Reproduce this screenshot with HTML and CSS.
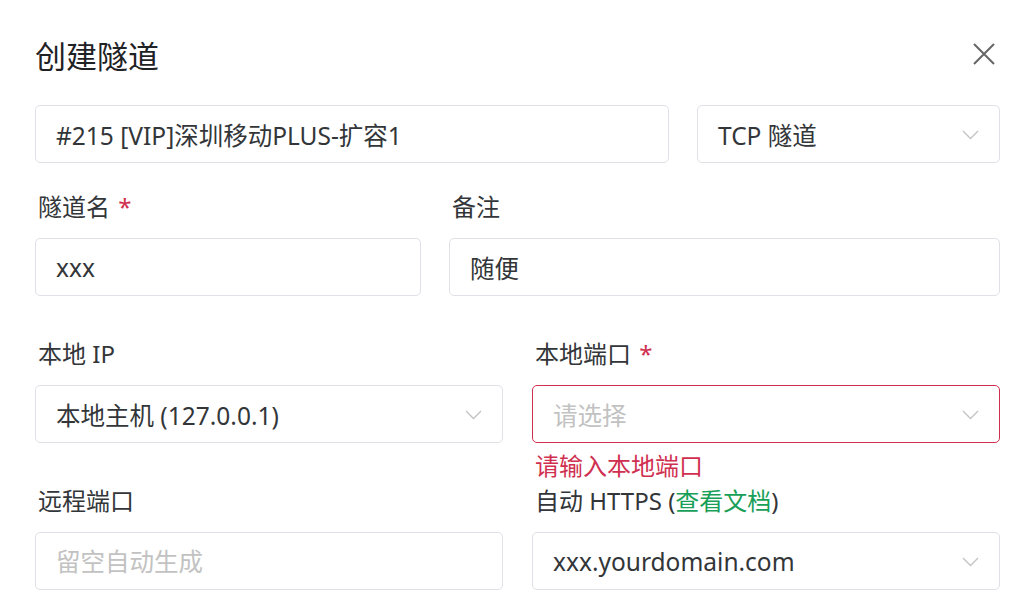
FILE: index.html
```html
<!DOCTYPE html>
<html lang="zh-CN">
<head>
<meta charset="utf-8">
<title>创建隧道</title>
<link rel="stylesheet" href="styles.css">
</head>
<body>
<div class="dialog">
  <div class="header">
    <div class="title">创建隧道</div>
    <button class="close" aria-label="关闭">
      <svg width="22" height="22" viewBox="0 0 22 22"><path d="M1 1 L21 21 M21 1 L1 21" stroke="#666" stroke-width="2" fill="none"/></svg>
    </button>
  </div>

  <div class="row row-top">
    <input class="field" value="#215 [VIP]深圳移动PLUS-扩容1">
    <div class="field select"><span>TCP 隧道</span><svg class="chev" width="17" height="10" viewBox="0 0 17 10"><path d="M1 1 L8.5 8.5 L16 1" stroke="#c2c2c2" stroke-width="1.3" fill="none"/></svg></div>
  </div>

  <div class="row row-2">
    <div class="item">
      <div class="label">隧道名 <span class="req">*</span></div>
      <input class="field" value="xxx">
      <div class="feedback"></div>
    </div>
    <div class="item">
      <div class="label">备注</div>
      <input class="field" value="随便">
      <div class="feedback"></div>
    </div>
  </div>

  <div class="row row-half">
    <div class="item">
      <div class="label">本地 IP</div>
      <div class="field select"><span>本地主机 (127.0.0.1)</span><svg class="chev" width="17" height="10" viewBox="0 0 17 10"><path d="M1 1 L8.5 8.5 L16 1" stroke="#c2c2c2" stroke-width="1.3" fill="none"/></svg></div>
      <div class="feedback"></div>
    </div>
    <div class="item">
      <div class="label">本地端口 <span class="req">*</span></div>
      <div class="field select error"><span class="placeholder">请选择</span><svg class="chev" width="17" height="10" viewBox="0 0 17 10"><path d="M1 1 L8.5 8.5 L16 1" stroke="#c2c2c2" stroke-width="1.3" fill="none"/></svg></div>
      <div class="feedback error-text">请输入本地端口</div>
    </div>
  </div>

  <div class="row row-half">
    <div class="item">
      <div class="label">远程端口</div>
      <input class="field" placeholder="留空自动生成">
    </div>
    <div class="item">
      <div class="label">自动 HTTPS (<a class="link" href="#">查看文档</a>)</div>
      <div class="field select"><span>xxx.yourdomain.com</span><svg class="chev" width="17" height="10" viewBox="0 0 17 10"><path d="M1 1 L8.5 8.5 L16 1" stroke="#c2c2c2" stroke-width="1.3" fill="none"/></svg></div>
    </div>
  </div>
</div>
</body>
</html>
```

FILE: styles.css
```css
html, body {
  margin: 0;
  padding: 0;
  background: #fff;
}
body {
  font-family: "Noto Sans", "Noto Sans CJK SC", sans-serif;
  color: rgb(51, 54, 57);
  font-size: 24px;
}
.dialog {
  padding: 0 27px 0 35px;
  overflow: hidden;
  height: 607px;
  box-sizing: border-box;
}
.header {
  display: flex;
  justify-content: space-between;
  align-items: center;
  padding-top: 36px;
  height: 40px;
  margin-bottom: 29px;
}
.title {
  font-size: 31px;
  line-height: 40px;
  color: rgb(31, 34, 37);
}
.close {
  border: 0;
  background: none;
  padding: 0;
  margin-right: 5px;
  margin-top: -4px;
  width: 22px;
  height: 22px;
  display: flex;
  cursor: pointer;
}
.row {
  display: grid;
}
.row-top {
  grid-template-columns: 634px 1fr;
  column-gap: 28px;
  margin-bottom: 26px;
}
.row-2 {
  grid-template-columns: 386px 1fr;
  column-gap: 28px;
}
.row-half {
  grid-template-columns: 1fr 1fr;
  column-gap: 29px;
}
.item {
  display: flex;
  flex-direction: column;
  min-width: 0;
}
.label {
  line-height: 34px;
  padding: 1px 0 14px 3px;
  white-space: nowrap;
}
.req {
  color: #d03050;
  margin-left: 2px;
}
.link {
  color: #18a058;
  text-decoration: none;
}
.field {
  box-sizing: border-box;
  height: 58px;
  width: 100%;
  border: 1px solid rgb(224, 224, 230);
  border-radius: 5px;
  padding: 0 20px 0 20px;
  font: inherit;
  font-size: 24.5px;
  color: inherit;
  background: #fff;
  outline: none;
  margin: 0;
}
.field::placeholder, .placeholder {
  color: rgb(194, 194, 194);
}
.select {
  display: flex;
  align-items: center;
  justify-content: space-between;
}
.select.error {
  border-color: #d03050;
}
.chev {
  flex: none;
  margin-top: 2px;
}
.feedback {
  height: 40px;
  box-sizing: border-box;
  padding: 6px 0 0 3px;
  line-height: 34px;
}
.error-text {
  color: #d03050;
}
```
